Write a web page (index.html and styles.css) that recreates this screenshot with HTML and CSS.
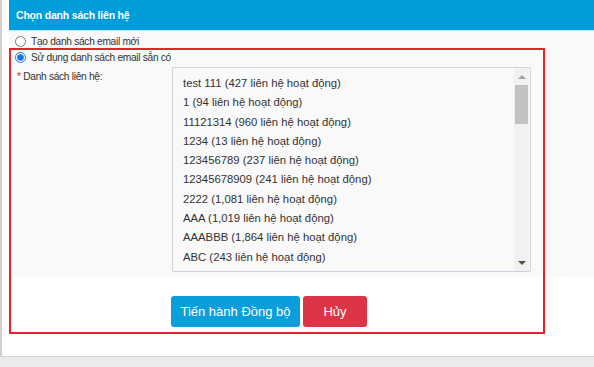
FILE: index.html
```html
<!DOCTYPE html>
<html lang="vi">
<head>
<meta charset="utf-8">
<link rel="stylesheet" href="styles.css">
</head>
<body>
<div class="page">
  <div class="panel">
    <div class="panel-head">Chọn danh sách liên hệ</div>
    <div class="panel-body">
      <label class="radio-row"><input type="radio" name="src"><span>Tạo danh sách email mới</span></label>
      <label class="radio-row"><input type="radio" name="src" checked><span>Sử dụng danh sách email sẵn có</span></label>
      <div class="form-row">
        <div class="form-label"><span class="req">*</span> Danh sách liên hệ:</div>
        <div class="listbox">
          <div class="list-items">
            <div class="item">test 111 (427 liên hệ hoạt động)</div>
            <div class="item">1 (94 liên hệ hoạt động)</div>
            <div class="item">11121314 (960 liên hệ hoạt động)</div>
            <div class="item">1234 (13 liên hệ hoạt động)</div>
            <div class="item">123456789 (237 liên hệ hoạt động)</div>
            <div class="item">12345678909 (241 liên hệ hoạt động)</div>
            <div class="item">2222 (1,081 liên hệ hoạt động)</div>
            <div class="item">AAA (1,019 liên hệ hoạt động)</div>
            <div class="item">AAABBB (1,864 liên hệ hoạt động)</div>
            <div class="item">ABC (243 liên hệ hoạt động)</div>
          </div>
          <div class="scrollbar">
            <div class="arrow up"></div>
            <div class="thumb"></div>
            <div class="track"></div>
            <div class="arrow down"></div>
          </div>
        </div>
      </div>
    </div>
    <div class="actions">
      <button class="btn btn-primary">Tiến hành Đồng bộ</button>
      <button class="btn btn-danger">Hủy</button>
    </div>
  </div>
  <div class="highlight"></div>
</div>
<div class="footer"></div>
</body>
</html>
```
FILE: styles.css
```css
* { box-sizing: border-box; }
html, body { margin: 0; padding: 0; background: #fff; }
body {
  width: 594px;
  height: 367px;
  overflow: hidden;
  font-family: "Liberation Sans", Arial, sans-serif;
}
.page {
  position: relative;
  height: 356px;
  border-left: 2px solid #cfcfcf;
  padding-left: 7px;
}
.panel { width: 100%; }
.panel-head {
  height: 31px;
  background: #009ddb;
  border-bottom: 1px solid #cfe3ee;
  color: #fff;
  font-weight: bold;
  font-size: 10.5px;
  letter-spacing: -0.2px;
  line-height: 30px;
  padding-left: 7px;
}
.panel-body {
  background: #f9f9f9;
  height: 246px;
  padding: 2px 0 5px 6px;
}
.radio-row {
  display: flex;
  align-items: center;
  height: 16px;
  font-size: 10.2px;
  letter-spacing: -0.3px;
  color: #333;
}
.radio-row input {
  margin: 0 5px 0 0;
  width: 11px;
  height: 11px;
  accent-color: #1a73e8;
}
.form-row {
  display: flex;
  margin-top: 2px;
}
.form-label {
  width: 157px;
  padding-left: 2px;
  padding-top: 3px;
  font-size: 10.2px;
  letter-spacing: -0.3px;
  color: #333;
  line-height: 14px;
}
.req { color: #e21b1b; }
.listbox {
  display: flex;
  width: 359px;
  height: 205px;
  border: 1px solid #d4d4d4;
  border-bottom-color: #c9d2dc;
  border-right-color: #d0d6de;
  border-radius: 2px;
  background: #f9f9f9;
  overflow: hidden;
}
.list-items {
  flex: 1;
  padding: 6px 0 0 10px;
  font-size: 11.3px;
  color: #333;
  overflow: hidden;
}
.item {
  height: 19.3px;
  line-height: 19.3px;
  white-space: nowrap;
}
.scrollbar {
  width: 15px;
  margin-right: 1px;
  background: #f1f1f1;
  display: flex;
  flex-direction: column;
}
.arrow {
  height: 17px;
  display: flex;
  align-items: center;
  justify-content: center;
}
.arrow::before {
  content: "";
  width: 0;
  height: 0;
  border-left: 4px solid transparent;
  border-right: 4px solid transparent;
}
.arrow.up::before { border-bottom: 4px solid #a3a3a3; }
.arrow.down::before { border-top: 4px solid #505050; }
.thumb {
  height: 39px;
  background: #c1c1c1;
  margin: 0 1px;
}
.track { flex: 1; }
.actions {
  display: flex;
  gap: 3px;
  margin-top: 19px;
  padding-left: 162px;
}
.btn {
  height: 31px;
  border: none;
  border-radius: 3px;
  color: #fff;
  font-family: "Liberation Sans", Arial, sans-serif;
  font-size: 13px;
  padding: 0;
}
.btn-primary { width: 129px; background: #0a9fdc; }
.btn-danger { width: 64px; background: #dc3545; }
.highlight {
  position: absolute;
  left: 7px;
  top: 48px;
  width: 536px;
  height: 286px;
  border: 2px solid #e8212b;
}
.footer {
  height: 11px;
  background: #ebebeb;
  border-top: 1px solid #d4d4d4;
}
```
